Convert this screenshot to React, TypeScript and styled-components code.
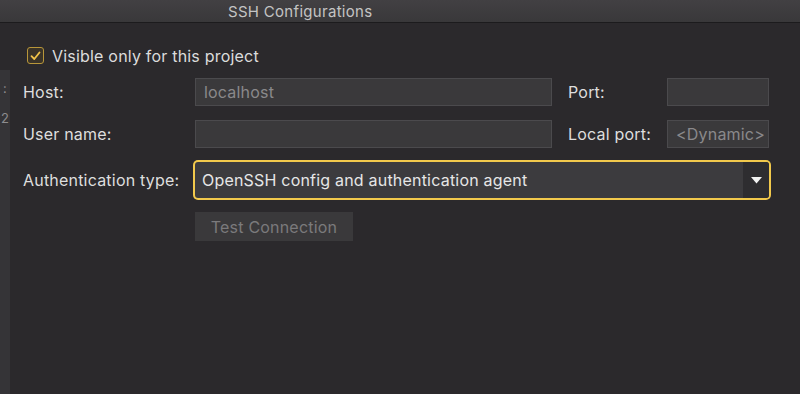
import React from 'react';
import styled, { createGlobalStyle } from 'styled-components';

const GlobalStyle = createGlobalStyle`
  html, body {
    margin: 0;
    padding: 0;
    background: #2b292c;
  }
  body {
    font-family: Inter, "Noto Sans", "Liberation Sans", sans-serif;
  }
`;

const Window = styled.div`
  width: 800px;
  height: 394px;
  background: #2b292c;
  display: flex;
  flex-direction: column;
  overflow: hidden;
  letter-spacing: 0.2px;
`;

const TitleBar = styled.div`
  height: 23px;
  flex-shrink: 0;
  background: linear-gradient(#424043, #39383a);
  border-bottom: 1px solid #1c1b1d;
  box-sizing: border-box;
  display: flex;
  align-items: center;
  padding-left: 228px;
  color: #c4c4c4;
  font-size: 15px;
  letter-spacing: 0.3px;
`;

const Body = styled.div`
  flex: 1;
  display: flex;
`;

const LeftStrip = styled.div`
  width: 10px;
  margin-top: 47px;
  background: #353437;
  color: #8d8c8f;
  font-size: 13px;
  display: flex;
  flex-direction: column;
  align-items: center;
  line-height: 1;
`;

const StripChar = styled.span<{ $top: number }>`
  margin-top: ${p => p.$top}px;
`;

const Content = styled.div`
  flex: 1;
  padding: 24px 0 0 13px;
  display: flex;
  flex-direction: column;
`;

const CheckRow = styled.label`
  display: flex;
  align-items: center;
  gap: 8px;
  margin-left: 4px;
  height: 17px;
  color: #dcdcdc;
  font-size: 16px;
`;

const CheckBox = styled.span`
  width: 17px;
  height: 17px;
  box-sizing: border-box;
  border: 1px solid #b8963a;
  border-radius: 3px;
  background: #3a3328;
  display: flex;
  align-items: center;
  justify-content: center;
`;

const Form = styled.div`
  margin-top: 14px;
  display: grid;
  grid-template-columns: 172px 357px 16px 99px 102px;
  grid-template-rows: 28px 28px 36px 29px;
  row-gap: 14px;
  align-items: center;
`;

const Label = styled.span<{ $col: number }>`
  grid-column: ${p => p.$col};
  color: #dedede;
  font-size: 16px;
  white-space: nowrap;
`;

const Field = styled.div<{ $col: number }>`
  grid-column: ${p => p.$col};
  height: 28px;
  box-sizing: border-box;
  background: #3a393b;
  border: 1px solid #4b4a4d;
  color: #8a898b;
  font-size: 16px;
  display: flex;
  align-items: center;
  padding-left: 8px;
  white-space: nowrap;
  overflow: hidden;
`;

const Select = styled.div`
  grid-column: 2 / 6;
  height: 36px;
  box-sizing: border-box;
  border-radius: 3px;
  box-shadow: 0 0 0 2px #f2c94c;
  background: #3c3b3e;
  display: flex;
  align-items: stretch;
  overflow: hidden;
`;

const SelectValue = styled.span`
  flex: 1;
  display: flex;
  align-items: center;
  padding-left: 7px;
  color: #e6e6e6;
  font-size: 16px;
`;

const SelectArrow = styled.span`
  width: 26px;
  background: #2e2d30;
  display: flex;
  align-items: center;
  justify-content: center;
`;

const Button = styled.button`
  grid-column: 2;
  justify-self: start;
  width: 158px;
  height: 29px;
  border: none;
  background: #3a393b;
  color: #7b7a7c;
  font-family: inherit;
  font-size: 16px;
  letter-spacing: 0.2px;
  padding: 0;
`;

export default function App() {
  return (
    <>
      <GlobalStyle />
      <Window>
        <TitleBar>SSH Configurations</TitleBar>
        <Body>
          <LeftStrip>
            <StripChar $top={12}>:</StripChar>
            <StripChar $top={17}>2</StripChar>
          </LeftStrip>
          <Content>
            <CheckRow>
              <CheckBox>
                <svg width="11" height="10" viewBox="0 0 11 10">
                  <path d="M1.5 5.2 L4.3 8 L9.5 1.5" fill="none" stroke="#f2c349" strokeWidth="1.8" strokeLinecap="round" strokeLinejoin="round" />
                </svg>
              </CheckBox>
              Visible only for this project
            </CheckRow>
            <Form>
              <Label $col={1}>Host:</Label>
              <Field $col={2}>localhost</Field>
              <Label $col={4}>Port:</Label>
              <Field $col={5} />

              <Label $col={1}>User name:</Label>
              <Field $col={2} />
              <Label $col={4}>Local port:</Label>
              <Field $col={5}>&lt;Dynamic&gt;</Field>

              <Label $col={1}>Authentication type:</Label>
              <Select>
                <SelectValue>OpenSSH config and authentication agent</SelectValue>
                <SelectArrow>
                  <svg width="11" height="7" viewBox="0 0 11 7">
                    <path d="M0 0 H11 L5.5 6.5 Z" fill="#f2f2f2" />
                  </svg>
                </SelectArrow>
              </Select>

              <Button>Test Connection</Button>
            </Form>
          </Content>
        </Body>
      </Window>
    </>
  );
}
